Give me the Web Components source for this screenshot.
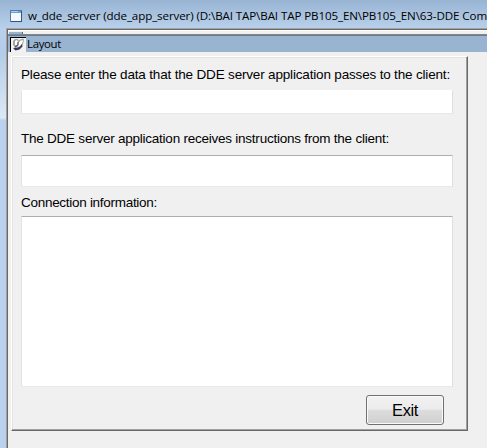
<!DOCTYPE html>
<html lang="en"><head><meta charset="utf-8"><title>w_dde_server</title>
<style>html,body{margin:0;width:487px;height:448px;overflow:hidden;background:#f0f0f0}</style></head>
<body>
<app-window>
  <title-bar slot="title"><fit-text width="459">w_dde_server (dde_app_server) (D:\BAI TAP\BAI TAP PB105_EN\PB105_EN\63-DDE Com</fit-text></title-bar>
  <tool-bar slot="tools"><fit-text width="34">Layout</fit-text></tool-bar>
  <group-panel>
    <data-field style="--pad:9px;--h:24px;--gap:7px;--top:#fff"><fit-text slot="label" width="429">Please enter the data that the DDE server application passes to the client:</fit-text></data-field>
    <data-field style="--pad:16px;--h:32px;--gap:8px"><fit-text slot="label" width="368">The DDE server application receives instructions from the client:</fit-text></data-field>
    <data-field style="--pad:7px;--h:171px;--gap:5px"><fit-text slot="label" width="136">Connection information:</fit-text></data-field>
    <push-button><fit-text width="26">Exit</fit-text></push-button>
  </group-panel>
</app-window>
<script>
const define = (name, markup, ready) => customElements.define(name, class extends HTMLElement {
  connectedCallback() {
    if (this.shadowRoot) return;
    this.attachShadow({mode: 'open'}).innerHTML = markup;
    if (ready) ready(this);
  }
});

define('app-window', `<style>
:host{display:grid;grid-template-rows:28px 1fr;width:487px;height:448px;background:linear-gradient(#98b4d3,#b9d1eb 29px,#b9d1eb)}
.main{display:grid;grid-template-columns:6px 1fr;min-height:0}
.edge{background:linear-gradient(#b9d1ea,#b4cce8 25px,#dce8f5 89px,#dce8f5 90px,#bbd2ec 92px)}
.client{display:grid;grid-template-rows:5px 17px 1fr;border-left:1px solid #a0a0a0;border-top:1px solid #a0a0a0;box-shadow:inset 1px 1px #696969;padding:1px 0 0 1px;background:#f0f0f0;min-width:0}
.strip{box-sizing:border-box;background:#f0f0f0;border-top:1px solid #fff;border-bottom:1px solid #858585;display:flex}
.strip i{width:13px;height:2px;margin-top:1px;background:#99b4d1;border-right:1px solid #696969;margin-left:1px}
</style><slot name="title"></slot><div class="main"><div class="edge"></div><div class="client"><div class="strip"><i></i></div><slot name="tools"></slot><slot></slot></div></div>`);

define('title-bar', `<style>
:host{display:flex;align-items:center;padding:4px 0 0 10px;gap:6px;box-sizing:border-box;height:28px;overflow:hidden;font:11.6px/18px "Open Sans","Noto Sans",sans-serif;color:#000;white-space:nowrap}
svg{flex:none}
</style><svg width="12" height="12" shape-rendering="crispEdges"><rect x=".5" y=".5" width="11" height="11" fill="#f5f9fc" stroke="#547ba6"/><rect x="1" y="1" width="10" height="2" fill="#65a0dc"/><path d="M1 1.5h7" stroke="#a8cff5"/><path d="M11.5 1v11M1 11.5h11" stroke="#31537e"/></svg><slot></slot>`);

define('tool-bar', `<style>
:host{display:flex;align-items:center;height:17px;box-sizing:border-box;border-top:1px solid #697c90;background:#99b4d1;padding-left:2px;gap:1px;font:11.4px/16px "Open Sans","Noto Sans",sans-serif;color:#000}
svg{flex:none}
</style><svg width="16" height="15" shape-rendering="crispEdges"><path fill="#f4f2ee" d="M0 0h16v15H0z"/><path d="M0 .5h16M.5 0v15" stroke="#000"/><g shape-rendering="auto"><path d="M3 4l2-2 3 0 1 2-1 4-3 2-2-2z" fill="#a3a2a6"/><path d="M5 4l2-1 1 2-1 3-2 0z" fill="#fff"/><path d="M9 3l4-1.5 1 1-1 5-4 4-5 1 0-2 4-2z" fill="#a6a5ac"/><path d="M10 4l3-1-1 4-3 3-2-1z" fill="#fff"/><path d="M3 11l4 0 3-1.500 2-2.500.5 2.500-3 3-4 1z" fill="#38365c"/><path d="M8 5l0 3-3 2" fill="none" stroke="#5a5862" stroke-width="1.2"/></g></svg><slot></slot>`);

define('group-panel', `<style>
:host{display:flex;flex-direction:column;box-sizing:border-box;margin:4px 0 0 3px;width:457px;height:375px;padding:0 13px 0 8px;border:1px solid #fff;border-right-color:#696969;border-bottom-color:#696969;box-shadow:inset -1px -1px #a0a0a0,inset 1px 1px #e3e3e3;background:#f0f0f0}
</style><slot></slot>`);

define('data-field', `<style>
:host{display:block;padding:var(--pad) 0 0 1px;font:13.5px/17px "Liberation Sans",Arial,sans-serif;color:#000}
.label{height:17px;white-space:nowrap}
.box{box-sizing:border-box;width:432px;height:var(--h);margin-top:var(--gap);background:#fff;border:1px solid #e2e3ea;border-top-color:var(--top,#abadb3);border-right-color:#dbdfe6;border-bottom-color:#e3e9ef;border-radius:1px}
</style><div class="label"><slot name="label"></slot></div><div class="box" role="textbox"></div>`);

define('push-button', `<style>
:host{display:block;align-self:flex-end;margin:8px 10px 0 0}
button{display:flex;align-items:center;justify-content:center;box-sizing:border-box;width:78px;height:30px;padding:0;border:1px solid #707070;border-radius:3px;box-shadow:inset 0 0 0 1px #fafafa;background:linear-gradient(#f2f2f2,#ebebeb 48%,#dddddd 49%,#cfcfcf);font:16.5px/20px "Liberation Sans",Arial,sans-serif;color:#000}
</style><button><slot></slot></button>`);

/* Spreads letter spacing so a caption occupies its nominal width. */
define('fit-text', `<style>:host{display:inline-block;white-space:nowrap}</style><slot></slot>`, el => {
  const n = el.textContent.length;
  el.style.letterSpacing = (Number(el.getAttribute('width')) - el.getBoundingClientRect().width) / n + 'px';
});
</script>
</body></html>
